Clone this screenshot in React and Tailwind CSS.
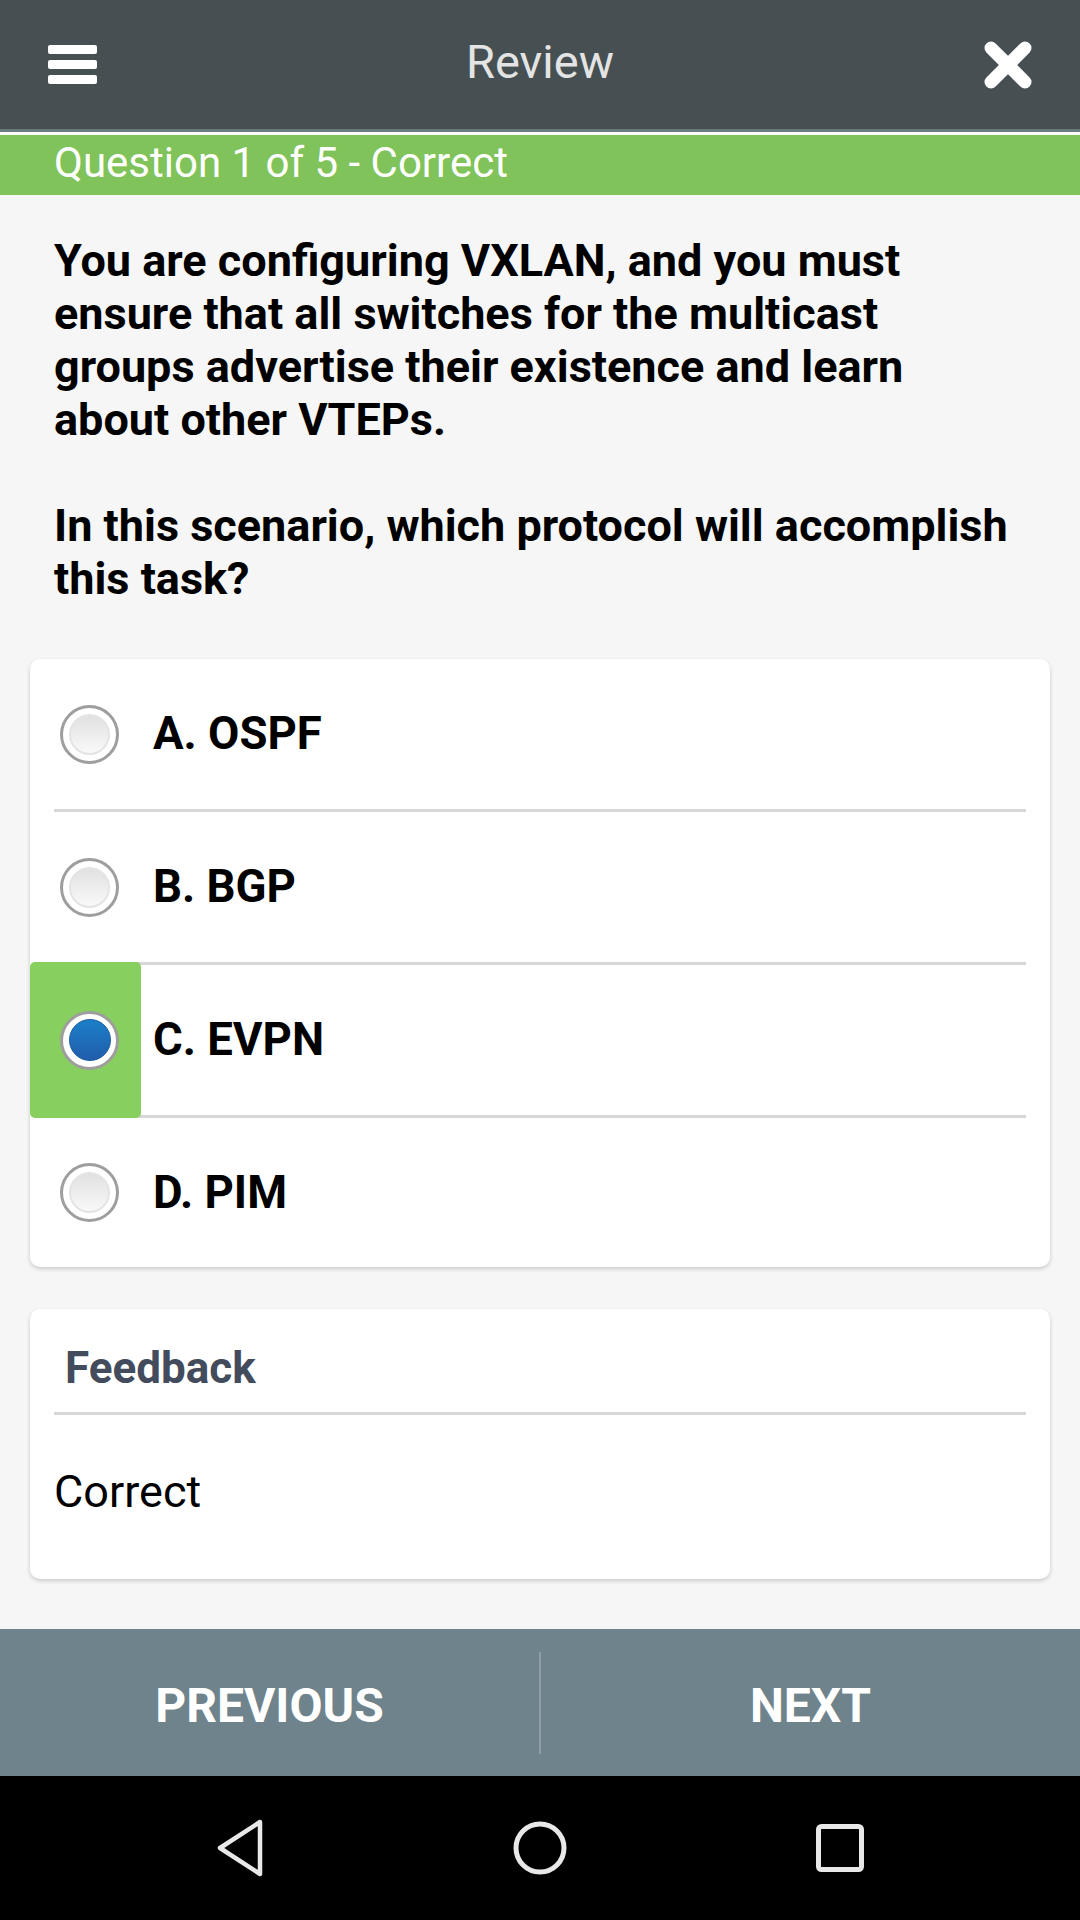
import React from 'react';

const options = [
  { id: 'A', label: 'A. OSPF' },
  { id: 'B', label: 'B. BGP' },
  { id: 'C', label: 'C. EVPN', selected: true },
  { id: 'D', label: 'D. PIM' },
];

const Radio = ({ selected }) => (
  <div className="relative z-10 ml-[6px] flex h-[59px] w-[59px] shrink-0 items-center justify-center rounded-full border-[3px] border-[#9e9e9e] bg-white">
    {selected ? (
      <div className="h-[42px] w-[42px] rounded-full border border-[#1b5b9f] bg-linear-to-b from-[#1b7fc8] to-[#205dab]" />
    ) : (
      <div className="h-[41px] w-[41px] rounded-full border-2 border-[#e4e4e4] bg-linear-to-b from-[#e1e1e1] to-[#f9f9f9]" />
    )}
  </div>
);

const App = () => {
  return (
    <div className="flex h-[1920px] w-[1080px] flex-col bg-[#f6f6f6] font-['Roboto',sans-serif]">
      {/* Top bar */}
      <div className="grid h-[129px] grid-cols-[1fr_auto_1fr] items-center bg-[#465053]">
        <div className="flex flex-col gap-[6px] pl-[48px]">
          <div className="h-[9px] w-[49px] rounded-[2px] bg-white" />
          <div className="h-[9px] w-[49px] rounded-[2px] bg-white" />
          <div className="h-[9px] w-[49px] rounded-[2px] bg-white" />
        </div>
        <div className="-mt-[6px] text-[47px] leading-none text-[#e4e4e4]">Review</div>
        <div className="flex justify-end pr-[48px]">
          <svg width="48" height="48" viewBox="0 0 48 48">
            <path d="M7 7L41 41M41 7L7 41" stroke="#ffffff" strokeWidth="13" strokeLinecap="round" />
          </svg>
        </div>
      </div>
      <div className="h-[3px] bg-[#6d7b7f]" />
      <div className="h-[3px] bg-white" />
      <div className="flex h-[60px] items-center bg-[#80c35a] px-[54px]">
        <span className="-mt-[4px] text-[42px] leading-none text-white">Question 1 of 5 - Correct</span>
      </div>

      {/* Question */}
      <div className="px-[54px] pt-[39px] text-[45px] font-bold leading-[53px] text-black whitespace-nowrap">
        <p>
          You are configuring VXLAN, and you must<br />
          ensure that all switches for the multicast<br />
          groups advertise their existence and learn<br />
          about other VTEPs.
        </p>
        <p className="mt-[53px]">
          In this scenario, which protocol will accomplish<br />
          this task?
        </p>
      </div>

      {/* Options */}
      <div className="mx-[30px] mt-[54px] rounded-[10px] bg-white px-[24px] shadow-[0_2px_4px_rgba(0,0,0,0.18)]">
        {options.map((o, i) => (
          <div
            key={o.id}
            className={`relative flex items-center ${
              i < options.length - 1 ? 'h-[153px] border-b-[3px] border-[#d7d7d7]' : 'h-[149px]'
            }`}
          >
            {o.selected && (
              <div className="absolute -top-[3px] -bottom-[3px] -left-[24px] w-[111px] rounded-[5px] bg-[#87cf5f]" />
            )}
            <Radio selected={o.selected} />
            <span className="relative ml-[34px] text-[45.5px] font-bold leading-none text-black">{o.label}</span>
          </div>
        ))}
      </div>

      {/* Feedback */}
      <div className="mx-[30px] mt-[42px] rounded-[10px] bg-white px-[24px] pt-[33px] pb-[62px] shadow-[0_2px_4px_rgba(0,0,0,0.18)]">
        <h3 className="pl-[11px] text-[44px] font-bold leading-[52px] text-[#434c5c]">Feedback</h3>
        <div className="mt-[18px] h-[3px] bg-[#d7d7d7]" />
        <p className="mt-[52px] text-[45px] leading-[50px] text-black">Correct</p>
      </div>

      {/* Footer buttons */}
      <div className="mt-auto flex h-[147px] bg-[#6f838c]">
        <div className="flex flex-1 items-center justify-center pt-[6px] text-[48px] font-bold text-white">PREVIOUS</div>
        <div className="h-[102px] w-[2px] self-center bg-[#8d9ea5]" />
        <div className="flex flex-1 items-center justify-center pt-[6px] text-[48px] font-bold text-white">NEXT</div>
      </div>

      {/* Android nav bar */}
      <div className="flex h-[144px] items-center justify-center bg-black">
        <div className="flex w-[300px] justify-center">
          <svg width="48" height="58" viewBox="0 0 48 58">
            <path d="M44 3L4 29L44 55Z" fill="none" stroke="#e8e8e8" strokeWidth="4.5" strokeLinejoin="round" />
          </svg>
        </div>
        <div className="flex w-[300px] justify-center">
          <svg width="54" height="54" viewBox="0 0 54 54">
            <circle cx="27" cy="27" r="24" fill="none" stroke="#e8e8e8" strokeWidth="5" />
          </svg>
        </div>
        <div className="flex w-[300px] justify-center">
          <svg width="50" height="50" viewBox="0 0 50 50">
            <rect x="3.5" y="3.5" width="43" height="43" rx="3" fill="none" stroke="#e8e8e8" strokeWidth="5" />
          </svg>
        </div>
      </div>
    </div>
  );
};

export default App;
